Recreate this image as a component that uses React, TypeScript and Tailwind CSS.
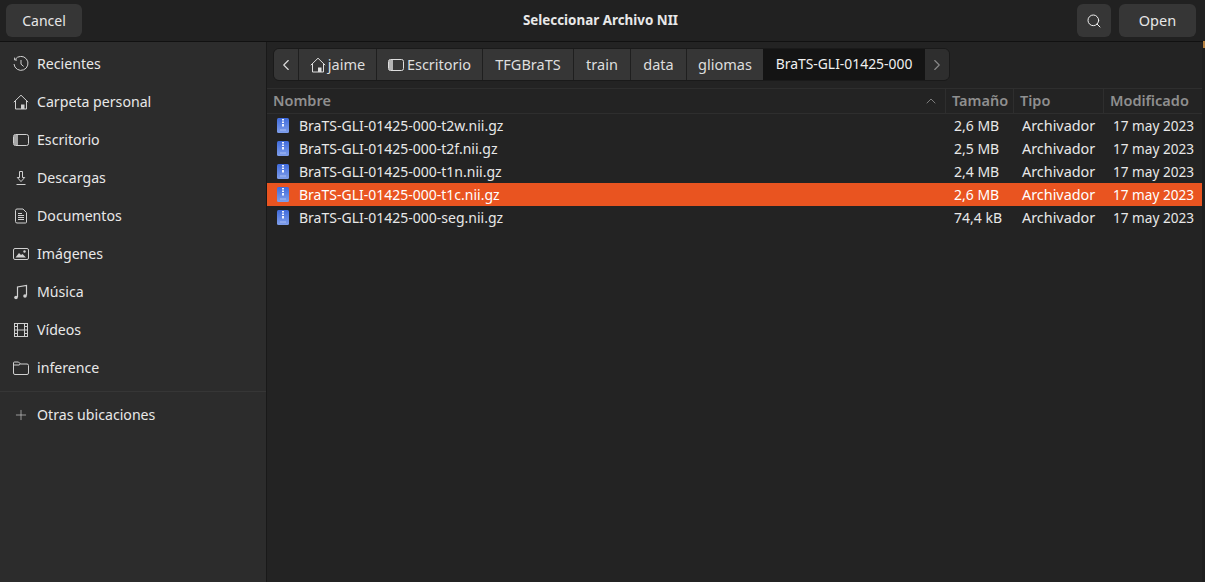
import { ChevronLeft, ChevronRight, ChevronUp, Search, Plus } from 'lucide-react';

const FONT = "font-['Noto_Sans','Open_Sans',sans-serif]";

function HomeIcon() {
  return (
    <svg width="16" height="16" viewBox="0 0 16 16" fill="none" stroke="currentColor" strokeWidth="1">
      <path d="M0.8 8.2 8 1.2l7.2 7" />
      <path d="M2.500 7v8h11V7" />
      <path d="M8 15v-4.500h3.500V15z" fill="currentColor" stroke="none" />
    </svg>
  );
}

function DesktopIcon() {
  return (
    <svg width="16" height="16" viewBox="0 0 16 16" fill="none">
      <rect x="0.500" y="2.500" width="15" height="11" rx="2" stroke="currentColor" />
      <path d="M2 3h3v10H2a1 1 0 0 1-1-1V4a1 1 0 0 1 1-1z" fill="currentColor" opacity="0.75" />
    </svg>
  );
}

function ClockIcon() {
  return (
    <svg width="16" height="16" viewBox="0 0 16 16" fill="none" stroke="currentColor">
      <path d="M2.200 3.400A7 7 0 1 1 1 8" />
      <path d="M1.600 1.600v2.400H4" />
      <path d="M8 4v4.200l2.600 2.200" />
    </svg>
  );
}

function DownloadIcon() {
  return (
    <svg width="16" height="16" viewBox="0 0 16 16" fill="none" stroke="currentColor">
      <path d="M6.500 1.500h3v6h2.200L8 11.600 4.300 7.500h2.200z" />
      <path d="M3.500 14.500h9" />
    </svg>
  );
}

function DocIcon() {
  return (
    <svg width="16" height="16" viewBox="0 0 16 16" fill="none" stroke="currentColor">
      <path d="M2.500 2.500a1.500 1.500 0 0 1 1.500-1.500h6l3.500 3.500v9.500a1 1 0 0 1-1 1H4a1.500 1.500 0 0 1-1.500-1.500z" />
      <path d="M5 5.500h4M5 7.500h6M5 9.500h6M5 11.500h6" />
    </svg>
  );
}

function ImageIcon() {
  return (
    <svg width="16" height="16" viewBox="0 0 16 16" fill="none">
      <rect x="0.500" y="2.500" width="15" height="11" rx="1.500" stroke="currentColor" />
      <path d="M2.500 11.500 6 7l2 2 1.500-1 3.500 3.500z" fill="currentColor" />
      <circle cx="11.500" cy="5.500" r="1.200" fill="currentColor" />
    </svg>
  );
}

function MusicIcon() {
  return (
    <svg width="16" height="16" viewBox="0 0 16 16" fill="none" stroke="currentColor">
      <path d="M4.500 13V3l9-1.500V11.500" strokeWidth="1.200" />
      <circle cx="3" cy="13.500" r="1.800" fill="currentColor" stroke="none" />
      <circle cx="12" cy="12" r="1.800" fill="currentColor" stroke="none" />
    </svg>
  );
}

function VideoIcon() {
  return (
    <svg width="16" height="16" viewBox="0 0 16 16" fill="none" stroke="currentColor">
      <rect x="1.500" y="1.500" width="13" height="13" />
      <path d="M4.500 1.500v13M11.500 1.500v13M4.500 8h7M1.500 4.500h3M1.500 8h3M1.500 11.500h3M11.500 4.500h3M11.500 8h3M11.500 11.500h3" />
    </svg>
  );
}

function FolderIcon() {
  return (
    <svg width="16" height="16" viewBox="0 0 16 16" fill="none" stroke="currentColor">
      <path d="M0.500 3a1 1 0 0 1 1-1h4l2 2h6.500a1.500 1.500 0 0 1 1.500 1.500v7.500a1.500 1.500 0 0 1-1.500 1.500h-12a1.500 1.500 0 0 1-1.500-1.500z" />
      <path d="M0.500 5h5.500l1.500-1" />
    </svg>
  );
}

function ArchiveIcon() {
  return (
    <svg width="12" height="15" viewBox="0 0 12 15" className="shrink-0">
      <defs>
        <linearGradient id="archive" x1="0" y1="0" x2="0" y2="1">
          <stop offset="0" stopColor="#3f6bdc" />
          <stop offset="1" stopColor="#7f9eea" />
        </linearGradient>
      </defs>
      <rect x="0" y="0" width="12" height="15" rx="1.500" fill="url(#archive)" />
      <rect x="5" y="1" width="2" height="1.500" fill="#eef2fd" />
      <rect x="5" y="3.500" width="2" height="1.500" fill="#eef2fd" />
      <rect x="5" y="6" width="2" height="2.500" fill="#eef2fd" />
      <path d="M3 12h6" stroke="#a9bdf2" strokeWidth="1" />
    </svg>
  );
}

const places = [
  { label: 'Recientes', icon: <ClockIcon /> },
  { label: 'Carpeta personal', icon: <HomeIcon /> },
  { label: 'Escritorio', icon: <DesktopIcon /> },
  { label: 'Descargas', icon: <DownloadIcon /> },
  { label: 'Documentos', icon: <DocIcon /> },
  { label: 'Imágenes', icon: <ImageIcon /> },
  { label: 'Música', icon: <MusicIcon /> },
  { label: 'Vídeos', icon: <VideoIcon /> },
  { label: 'inference', icon: <FolderIcon /> },
];

const files = [
  { name: 'BraTS-GLI-01425-000-t2w.nii.gz', size: '2,6 MB' },
  { name: 'BraTS-GLI-01425-000-t2f.nii.gz', size: '2,5 MB' },
  { name: 'BraTS-GLI-01425-000-t1n.nii.gz', size: '2,4 MB' },
  { name: 'BraTS-GLI-01425-000-t1c.nii.gz', size: '2,6 MB', selected: true },
  { name: 'BraTS-GLI-01425-000-seg.nii.gz', size: '74,4 kB' },
];

export default function App() {
  return (
    <div className={`${FONT} w-[1205px] h-[582px] overflow-hidden flex flex-col bg-[#2c2c2c] text-[14.5px] text-[#f0f0f0]`}>
      {/* Header */}
      <div className="h-[42px] shrink-0 flex items-center justify-between px-[6px] bg-[#212121] border-b border-[#111111]">
        <button className="w-[76px] h-[33px] rounded-[6px] bg-[#363636] text-[14px] text-[#e6e6e6]">Cancel</button>
        <div className="font-bold text-[13.4px] text-[#e8e8e8] ml-[42px]">Seleccionar Archivo NII</div>
        <div className="flex items-center gap-[8px] mr-[3px]">
          <button className="w-[34px] h-[33px] rounded-[6px] bg-[#363636] flex items-center justify-center">
            <Search size={16} strokeWidth={1.5} />
          </button>
          <button className="w-[77px] h-[33px] rounded-[6px] bg-[#363636] text-[#e6e6e6]">Open</button>
        </div>
      </div>

      <div className="flex-1 flex min-h-0">
        {/* Sidebar */}
        <div className="w-[267px] shrink-0 bg-[#2c2c2c] border-r border-[#191919] pt-[3px] text-[14.15px]">
          {places.map((p) => (
            <div key={p.label} className="h-[38px] flex items-center gap-[8px] pl-[13px] text-[#e8e8e8]">
              <span className="text-[#d0d0d0] flex">{p.icon}</span>
              {p.label}
            </div>
          ))}
          <div className="border-t border-[#363636] mt-[4px] pt-[4px]">
            <div className="h-[38px] flex items-center gap-[8px] pl-[13px] text-[#e8e8e8]">
              <span className="text-[#d0d0d0] flex"><Plus size={16} strokeWidth={1} /></span>
              Otras ubicaciones
            </div>
          </div>
        </div>

        {/* Main */}
        <div className="flex-1 min-w-0 flex">
          <div className="flex-1 min-w-0 bg-[#232323] flex flex-col">
            <div className="h-[47px] shrink-0 flex items-start pt-[6px] pl-[6px] border-b border-[#2e2e2e]">
              <div className="h-[33px] flex rounded-[6px] border border-[#1a1a1a] overflow-hidden text-[#dedede]">
                <div className="w-[25px] bg-[#363636] flex items-center justify-center border-r border-[#1f1f1f]"><ChevronLeft size={18} strokeWidth={1.5} /></div>
                <div className="w-[78px] bg-[#363636] flex items-center justify-center gap-[2px] border-r border-[#1f1f1f]"><HomeIcon />jaime</div>
                <div className="w-[106px] bg-[#363636] flex items-center justify-center gap-[3px] border-r border-[#1f1f1f]"><DesktopIcon />Escritorio</div>
                <div className="w-[91px] bg-[#363636] flex items-center justify-center border-r border-[#1f1f1f]">TFGBraTS</div>
                <div className="w-[57px] bg-[#363636] flex items-center justify-center border-r border-[#1f1f1f]">train</div>
                <div className="w-[56px] bg-[#363636] flex items-center justify-center border-r border-[#1f1f1f]">data</div>
                <div className="w-[76px] bg-[#363636] flex items-center justify-center">gliomas</div>
                <div className="w-[162px] bg-[#141414] flex items-center justify-center text-[13.9px] text-[#f0f0f0]">BraTS-GLI-01425-000</div>
                <div className="w-[24px] bg-[#2e2e2e] flex items-center justify-center text-[#8a8a8a]"><ChevronRight size={18} strokeWidth={1.5} /></div>
              </div>
            </div>

            <div className="h-[25px] shrink-0 flex items-center font-semibold text-[#8f8f8f] border-b border-[#2e2e2e] pr-[1px]">
              <div className="flex-1 flex items-center justify-between pl-[6px] pr-[6px] border-r border-[#2e2e2e] h-full">
                Nombre
                <ChevronUp size={16} strokeWidth={1.25} />
              </div>
              <div className="w-[68px] pl-[6px] border-r border-[#2e2e2e] h-full flex items-center">Tamaño</div>
              <div className="w-[90px] pl-[6px] border-r border-[#2e2e2e] h-full flex items-center">Tipo</div>
              <div className="w-[97px] pl-[6px] h-full flex items-center">Modificado</div>
            </div>

            <div>
              {files.map((f) => (
                <div key={f.name} className={`h-[23px] flex items-center pr-[1px] leading-[20px] ${f.selected ? 'bg-[#e95420] text-white' : 'text-[#e8e8e8]'}`}>
                  <div className="flex-1 flex items-center gap-[10px] pl-[10px] text-[14px]">
                    <ArchiveIcon />
                    {f.name}
                  </div>
                  <div className="w-[68px] pl-[8px] text-[14px]">{f.size}</div>
                  <div className="w-[91px] pl-[8px] text-[14.4px] leading-[19px]">Archivador</div>
                  <div className="w-[96px] pl-[8px] whitespace-nowrap text-[13.6px]">17 may 2023</div>
                </div>
              ))}
            </div>
          </div>
          {/* window edge, with the sliver of what lies behind the dialog */}
          <div className="relative w-[3px] shrink-0 bg-[#1f1f1f]">
            <div className="absolute left-[1px] top-[-1px] w-[2px] h-[7px] bg-[#b5803f]" />
          </div>
        </div>
      </div>
    </div>
  );
}
